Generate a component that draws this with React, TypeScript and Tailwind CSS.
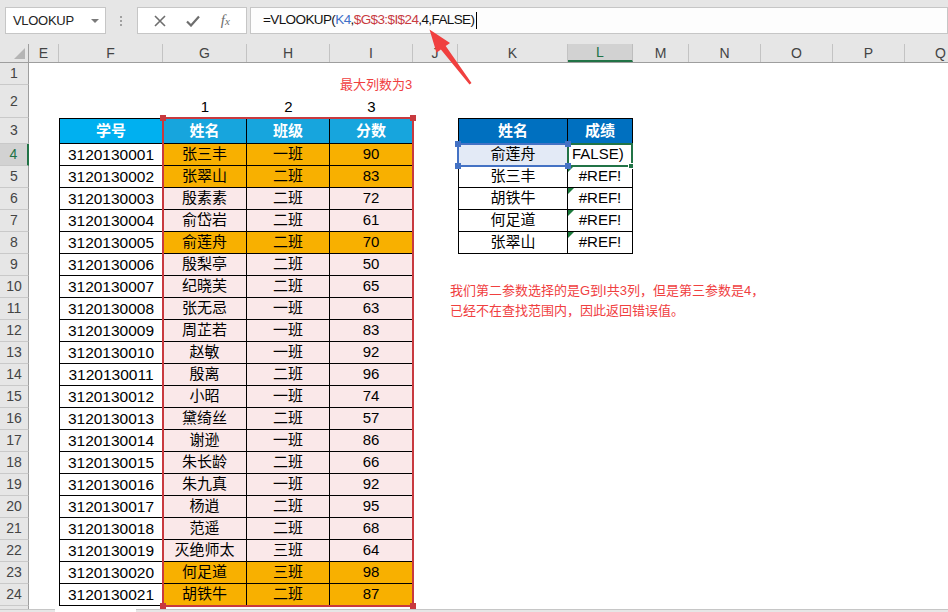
import React from "react";

const W: Record<string, string> = {
  E: "w-[30px]",
  F: "w-[104px]",
  G: "w-[84px]",
  H: "w-[83px]",
  I: "w-[83px]",
  J: "w-[45px]",
  K: "w-[110px]",
  L: "w-[65px]",
  M: "w-[56px]",
  N: "w-[72px]",
  O: "w-[72px]",
  P: "w-[72px]",
  Q: "w-[72px]",
};
const COLS = Object.keys(W);

type Student = [string, string, string, string, boolean];

const students: Student[] = [
  ["3120130001", "张三丰", "一班", "90", true],
  ["3120130002", "张翠山", "二班", "83", true],
  ["3120130003", "殷素素", "二班", "72", false],
  ["3120130004", "俞岱岩", "二班", "61", false],
  ["3120130005", "俞莲舟", "二班", "70", true],
  ["3120130006", "殷梨亭", "二班", "50", false],
  ["3120130007", "纪晓芙", "二班", "65", false],
  ["3120130008", "张无忌", "一班", "63", false],
  ["3120130009", "周芷若", "一班", "83", false],
  ["3120130010", "赵敏", "一班", "92", false],
  ["3120130011", "殷离", "二班", "96", false],
  ["3120130012", "小昭", "一班", "74", false],
  ["3120130013", "黛绮丝", "二班", "57", false],
  ["3120130014", "谢逊", "一班", "86", false],
  ["3120130015", "朱长龄", "二班", "66", false],
  ["3120130016", "朱九真", "一班", "92", false],
  ["3120130017", "杨逍", "二班", "95", false],
  ["3120130018", "范遥", "二班", "68", false],
  ["3120130019", "灭绝师太", "三班", "64", false],
  ["3120130020", "何足道", "三班", "98", true],
  ["3120130021", "胡铁牛", "二班", "87", true],
];

const lookup = [
  ["俞莲舟", "FALSE)"],
  ["张三丰", "#REF!"],
  ["胡铁牛", "#REF!"],
  ["何足道", "#REF!"],
  ["张翠山", "#REF!"],
];

function Cell({
  col,
  className = "",
  children,
}: {
  col: string;
  className?: string;
  children?: React.ReactNode;
}) {
  return (
    <div className={`${W[col]} shrink-0 flex items-center justify-center ${className}`}>
      {children}
    </div>
  );
}

function cellsFor(n: number): Record<string, React.ReactNode> {
  const out: Record<string, React.ReactNode> = {};
  if (n === 2) {
    out.G = <Cell key="G" col="G" className="items-end">1</Cell>;
    out.H = <Cell key="H" col="H" className="items-end">2</Cell>;
    out.I = <Cell key="I" col="I" className="items-end">3</Cell>;
  }
  if (n === 3) {
    out.F = (
      <Cell key="F" col="F" className="bg-[#00b0f0] border border-black text-white font-bold">
        学号
      </Cell>
    );
    ["G", "H", "I"].forEach((c, i) => {
      out[c] = (
        <Cell key={c} col={c} className="bg-[#17a5dd] border-y border-r border-black text-white font-bold">
          {["姓名", "班级", "分数"][i]}
        </Cell>
      );
    });
    out.K = (
      <Cell key="K" col="K" className="bg-[#0070c0] border border-black text-white font-bold">
        姓名
      </Cell>
    );
    out.L = (
      <Cell key="L" col="L" className="bg-[#0070c0] border-y border-r border-black text-white font-bold">
        成绩
      </Cell>
    );
  }
  if (n >= 4) {
    const s = students[n - 4];
    const fill = s[4] ? "bg-[#f8b000]" : "bg-[#fae8e9]";
    out.F = (
      <Cell key="F" col="F" className="bg-white border-x border-b border-black text-[15.5px]">
        {s[0]}
      </Cell>
    );
    ["G", "H", "I"].forEach((c, i) => {
      out[c] = (
        <Cell key={c} col={c} className={`${fill} border-r border-b border-black`}>
          {s[i + 1]}
        </Cell>
      );
    });
  }
  if (n >= 4 && n <= 8) {
    const l = lookup[n - 4];
    out.K = (
      <Cell
        key="K"
        col="K"
        className={`border-x border-b border-black ${n === 4 ? "bg-[#e3eaf6]" : "bg-white"}`}
      >
        {l[0]}
      </Cell>
    );
    out.L =
      n === 4 ? (
        <Cell key="L" col="L" className="border-r border-b border-black justify-start pl-[4px]">
          {l[1]}
        </Cell>
      ) : (
        <Cell key="L" col="L" className="relative border-r border-b border-black">
          <svg className="absolute left-0 top-0" width="6" height="6" viewBox="0 0 6 6">
            <path d="M0 0H6L0 6Z" fill="#1c7a3c" />
          </svg>
          {l[1]}
        </Cell>
      );
  }
  return out;
}

function SheetRow({ n }: { n: number }) {
  const h = n === 2 ? "h-[33px]" : n === 3 ? "h-[26px]" : "h-[22px]";
  const active = n === 4;
  const cells = cellsFor(n);
  return (
    <div className={`flex ${h}`}>
      <div
        className={`w-[29px] shrink-0 flex items-center justify-center text-[14px] border-b border-b-[#c9c9c9] ${
          active
            ? "bg-[#d2d2d2] text-[#217346] border-r-2 border-r-[#217346]"
            : "bg-[#e6e6e6] text-[#444] border-r border-r-[#9e9e9e]"
        }`}
      >
        {n}
      </div>
      {COLS.map((c) => cells[c] ?? <div key={c} className={`${W[c]} shrink-0`} />)}
    </div>
  );
}

function Corner({ className }: { className: string }) {
  return <div className={`absolute w-[6px] h-[6px] ${className}`} />;
}

export default function App() {
  const rows = Array.from({ length: 24 }, (_, i) => i + 1);
  return (
    <div className="relative w-[948px] h-[612px] overflow-hidden bg-white text-black text-[15px] font-['Liberation_Sans','Noto_Sans_CJK_SC',sans-serif]">
      {/* formula bar */}
      <div className="h-[44px] bg-[#e6e6e6] flex items-start pt-[7px]">
        <div className="ml-[5px] w-[101px] h-[27px] bg-white border border-[#c6c6c6] flex items-center pl-[7px] pr-[6px] text-[13px] tracking-[-0.3px] text-[#222]">
          <span className="flex-1">VLOOKUP</span>
          <svg width="8" height="4" viewBox="0 0 8 4">
            <path d="M0 0H8L4 4Z" fill="#7a7a7a" />
          </svg>
        </div>
        <div className="w-[31px] h-[27px] flex flex-col items-center justify-center gap-[2px] pr-[2px]">
          <div className="w-[2px] h-[2px] bg-[#a0a0a0]" />
          <div className="w-[2px] h-[2px] bg-[#a0a0a0]" />
          <div className="w-[2px] h-[2px] bg-[#a0a0a0]" />
        </div>
        <div className="w-[110px] h-[27px] bg-white border border-[#c6c6c6] flex items-center justify-around px-[6px]">
          <svg width="12" height="12" viewBox="0 0 12 12">
            <path d="M1 1L11 11M11 1L1 11" stroke="#6e6e6e" strokeWidth="1.6" />
          </svg>
          <svg width="14" height="12" viewBox="0 0 14 12">
            <path d="M1 6.5L5 10.5L13 1.5" stroke="#6e6e6e" strokeWidth="2.2" fill="none" />
          </svg>
          <span className="italic text-[#6e6e6e] font-['Liberation_Serif',serif] text-[15px] leading-none">
            f<span className="text-[11px]">x</span>
          </span>
        </div>
        <div className="ml-[3px] flex-1 h-[27px] bg-[#fdfdfd] border border-[#c6c6c6] flex items-center pl-[12px] text-[13.5px] tracking-[-0.6px] text-[#111]">
          <span>=VLOOKUP(</span>
          <span className="text-[#3f70c8]">K4</span>
          <span>,</span>
          <span className="text-[#c83a3f]">$G$3:$I$24</span>
          <span>,4,FALSE)</span>
          <span className="ml-[2px] w-px h-[17px] bg-black" />
        </div>
      </div>

      {/* column headers */}
      <div className="flex h-[19px] bg-[#e6e6e6] border-b border-[#9e9e9e] text-[14px] text-[#444]">
        <div className="w-[29px] shrink-0 border-r border-[#9e9e9e] relative">
          <svg className="absolute right-[3px] bottom-[3px]" width="11" height="11" viewBox="0 0 11 11">
            <path d="M11 0V11H0Z" fill="#b5b5b5" />
          </svg>
        </div>
        {COLS.map((c) =>
          c === "L" ? (
            <div
              key={c}
              className={`${W[c]} shrink-0 flex items-center justify-center bg-[#d2d2d2] text-[#217346] border-r border-r-[#bdbdbd] border-b-2 border-b-[#217346]`}
            >
              {c}
            </div>
          ) : (
            <div key={c} className={`${W[c]} shrink-0 flex items-center justify-center border-r border-[#c3c3c3]`}>
              {c}
            </div>
          )
        )}
      </div>

      {/* sheet body */}
      <div>
        {rows.map((n) => (
          <SheetRow key={n} n={n} />
        ))}
        <div className="flex h-[3px]">
          <div className="w-[29px] bg-[#e6e6e6] border-r border-[#9e9e9e]" />
        </div>
        <div className="flex h-[3px]">
          <div className="w-[55px] bg-[#e6e6e6] border-t border-[#c6c6c6]" />
          <div className="w-[81px] bg-white" />
          <div className="flex-1 bg-[#e6e6e6] border-t border-[#c6c6c6]" />
        </div>
      </div>

      {/* reference range G3:I24 */}
      <div className="absolute left-[162px] top-[117px] w-[252px] h-[490px] border-2 border-[#c83a3f]" />
      <Corner className="left-[160px] top-[115px] bg-[#c83a3f]" />
      <Corner className="left-[410px] top-[115px] bg-[#c83a3f]" />
      <Corner className="left-[160px] top-[603px] bg-[#c83a3f]" />
      <Corner className="left-[410px] top-[603px] bg-[#c83a3f]" />

      {/* reference K4 */}
      <div className="absolute left-[457px] top-[143px] w-[112px] h-[24px] border-2 border-[#4472c4]" />
      {/* active cell L4 */}
      <div className="absolute left-[567px] top-[143px] w-[66px] h-[24px] border-2 border-[#217346]" />
      <Corner className="left-[455px] top-[141px] bg-[#4472c4]" />
      <Corner className="left-[565px] top-[141px] bg-[#4472c4]" />
      <Corner className="left-[455px] top-[163px] bg-[#4472c4]" />
      <Corner className="left-[565px] top-[163px] bg-[#4472c4]" />
      <Corner className="left-[628px] top-[163px] bg-[#217346] border border-white" />

      {/* annotations */}
      <div className="absolute left-[340px] top-[76px] text-[13px] leading-[18px] text-[#f0403f]">最大列数为3</div>
      <div className="absolute left-[450px] top-[281px] text-[13px] leading-[20px] text-[#f0403f]">
        <div>我们第二参数选择的是G到I共3列，但是第三参数是4，</div>
        <div>已经不在查找范围内，因此返回错误值。</div>
      </div>
      <svg className="absolute left-0 top-0 pointer-events-none" width="948" height="612" viewBox="0 0 948 612">
        <path
          d="M429.5 29.5L450 43L445.7 45.9L471.5 83L469.5 84.5L440.9 49.5L436.5 52.8Z"
          fill="#f0403f"
        />
      </svg>
    </div>
  );
}
